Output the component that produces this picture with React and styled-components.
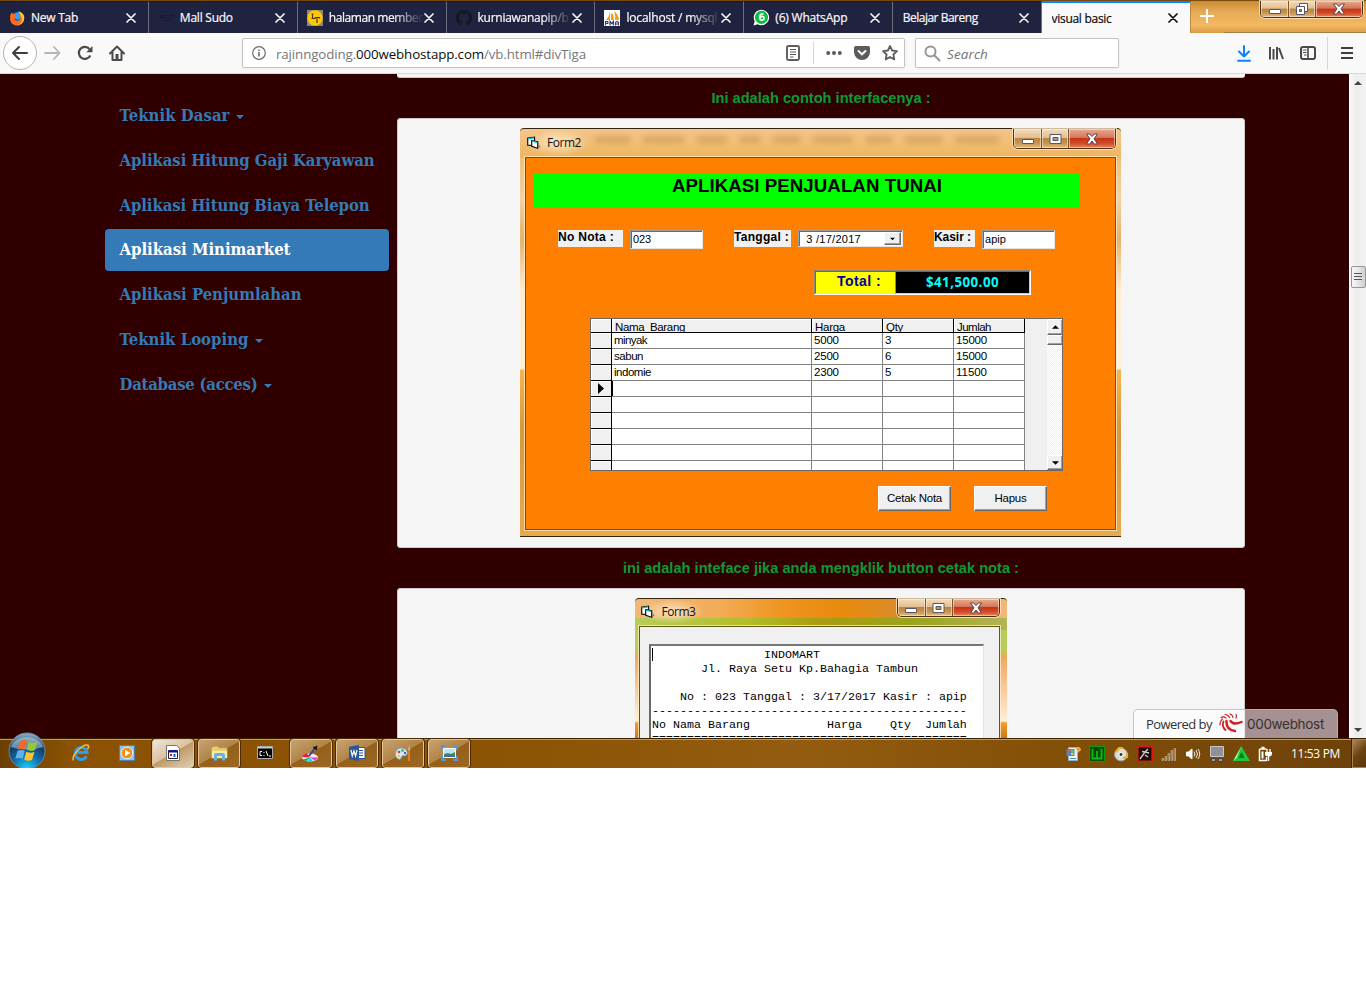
import React, { useLayoutEffect, useRef, useState } from "react";
import styled, { createGlobalStyle, css } from "styled-components";

const ui = `"Open Sans", "Noto Sans", sans-serif`;
const arial = `"Liberation Sans", Arial, sans-serif`;

const Global = createGlobalStyle`
  *, *::before, *::after { box-sizing: border-box; }
  html, body { margin: 0; background: #fff; }
  body { overflow: hidden; }
  svg { display: block; flex: none; }
`;

/* Text tracked out to a set width */
const FitSpan = styled.span`
  display: inline-block;
  flex: none;
  white-space: pre;
`;
function Fit({ w, children }) {
  const ref = useRef(null);
  const [ls, setLs] = useState(0);
  useLayoutEffect(() => {
    const n = ref.current.textContent.length;
    setLs((w - ref.current.getBoundingClientRect().width) / n);
  }, [w]);
  return <FitSpan ref={ref} style={{ letterSpacing: ls }}>{children}</FitSpan>;
}

const Desktop = styled.main`
  width: 1366px;
  height: 768px;
  display: flex;
  flex-direction: column;
  overflow: hidden;
  font-family: ${ui};
`;

/* ---------- tabs ---------- */
const TabStrip = styled.div`
  height: 33px;
  flex: none;
  display: flex;
  border-top: 1px solid #7a4a08;
  background: linear-gradient(#c98a35 0, #e8ab57 35%, #f3b861 75%, #d99b48);
`;
const Tab = styled.div`
  width: 148.86px;
  flex: none;
  height: 32px;
  display: flex;
  align-items: center;
  padding: 0 12px 0 ${(p) => (p.$plain ? 9.5 : 9)}px;
  font-size: 12px;
  color: ${(p) => (p.$active ? "#0c0c0d" : "#f9f9fa")};
  background: ${(p) => (p.$active ? "#f9f9fa" : "#202340")};
  border-top: ${(p) => (p.$active ? "2px solid #0a84ff" : "1px solid #151731")};
  border-right: 1px solid ${(p) => (p.$active ? "#b98a48" : "#6b6c7d")};
`;
const TabIcon = styled.div`
  width: 16px;
  margin-right: 6px;
`;
const TabTitle = styled.div`
  flex: 1;
  min-width: 0;
  overflow: hidden;
  line-height: 18px;
  padding-top: 1px;
  -webkit-text-stroke: 0.2px;
  ${(p) => p.$fade && css`mask-image: linear-gradient(90deg, #000 68%, rgba(0, 0, 0, 0.1) 96%);`}
`;
const NewTab = styled.div`
  width: 33px;
  flex: none;
  padding: 8px 0 0 9px;
`;
const StripEnd = styled.div`
  flex: 1;
  display: flex;
  justify-content: flex-end;
  padding-right: 3px;
  border-bottom: 1px solid #a87d43;
`;

/* ---------- window buttons ---------- */
const Caps = styled.div`
  display: flex;
  flex: none;
  width: 103px;
  height: ${(p) => p.$h || 20}px;
  border: 1px solid #4d3116;
  border-top: 0;
  border-radius: 0 0 5px 5px;
  overflow: hidden;
  box-shadow: 0 0 0 1px rgba(255, 236, 205, 0.75);
`;
const Cap = styled.div`
  width: ${(p) => p.$w}px;
  display: flex;
  align-items: center;
  justify-content: center;
  box-shadow: inset 0 0 0 1px rgba(255, 240, 220, 0.55);
  border-right: ${(p) => (p.$close ? 0 : "1px solid #7c552c")};
  background: ${(p) =>
    p.$close
      ? "linear-gradient(#e8ab92 0, #d5765a 45%, #c2351a 50%, #d44a25 75%, #e8845a 100%)"
      : "linear-gradient(#f3dcbd 0, #e2bf90 45%, #b98342 50%, #c8944f 75%, #e5bd85 100%)"};
`;
function WindowButtons({ h, restore }) {
  return (
    <Caps $h={h}>
      <Cap $w={28}>
        <svg width="14" height="12" viewBox="0 0 14 12"><rect x="1.5" y="6.5" width="11" height="4" rx="0.5" fill="#fff" stroke="#54586a" /></svg>
      </Cap>
      <Cap $w={27}>
        {restore ? (
          <svg width="14" height="13" viewBox="0 0 14 13" fill="#fff" stroke="#54586a">
            <path d="M4.5.5h8v8h-3v-5h-5z" />
            <path d="M1.5 3.5h8v8h-8z" /><path fill="#b98342" d="M4.5 6.5h2v2h-2z" />
          </svg>
        ) : (
          <svg width="13" height="12" viewBox="0 0 13 12" fill="#fff" stroke="#54586a">
            <path d="M1 1.5h11v9H1z" /><path fill="#c8944f" d="M4 4.5h5v3H4z" />
          </svg>
        )}
      </Cap>
      <Cap $w={46} $close>
        <svg width="14" height="12" viewBox="0 0 14 12"><path d="M1.500 1h3.200L7 3.600 9.300 1h3.200L9 5.800 12.500 11H9.300L7 8 4.700 11H1.500l3.500-5.200z" fill="#fff" stroke="#54464e" /></svg>
      </Cap>
    </Caps>
  );
}

/* ---------- toolbar ---------- */
const Toolbar = styled.div`
  height: 41px;
  flex: none;
  display: flex;
  align-items: center;
  padding-left: 3px;
  background: #f9f9fa;
  border-bottom: 1px solid #d9d9da;
`;
const BackButton = styled.div`
  width: 34px;
  height: 34px;
  flex: none;
  display: grid;
  place-items: center;
  border: 1px solid #b4b4b5;
  border-radius: 50%;
  background: #fff;
`;
const Slot = styled.div`
  width: ${(p) => p.$w}px;
  flex: none;
  display: grid;
  place-items: center;
  margin-left: ${(p) => p.$ml || 0}px;
`;
const Field = styled.div`
  width: ${(p) => p.$w}px;
  height: 30px;
  flex: none;
  display: flex;
  align-items: center;
  margin-left: ${(p) => p.$ml}px;
  padding: 0 6px 0 8px;
  background: #fff;
  border: 1px solid #c3c3c4;
  border-radius: 2px;
  box-shadow: 0 1px 3px rgba(0, 0, 0, 0.06);
`;
const Url = styled.div`
  flex: 1;
  padding: 1px 0 0 9px;
  font-size: 13.3px;
  color: #77777a;
  b { font-weight: 400; color: #0c0c0d; }
`;
const SearchText = styled.div`
  padding: 1px 0 0 6px;
  font-size: 13.5px;
  font-style: italic;
  color: #737375;
`;
const Rule = styled.div`
  width: 1px;
  height: ${(p) => p.$h}px;
  margin: 0 ${(p) => p.$r}px 0 ${(p) => p.$l}px;
  background: #d7d7db;
`;

/* ---------- page ---------- */
const Viewport = styled.div`
  height: 664px;
  flex: none;
  display: flex;
  overflow: hidden;
  background: #300000;
`;
const PageArea = styled.div`
  width: 1349px;
  flex: none;
  display: flex;
  align-items: flex-start;
  padding-left: 105px;
`;
const Pills = styled.nav`
  width: 284px;
  padding-top: 20.6px;
  margin-right: 8px;
  display: flex;
  flex-direction: column;
  gap: 2.8px;
`;
const Pill = styled.a`
  height: 42px;
  flex: none;
  display: flex;
  align-items: center;
  padding: 0 14px 1px 14.5px;
  border-radius: 4px;
  font: bold 16.6px "DejaVu Serif Condensed", "DejaVu Serif", serif;
  font-stretch: condensed;
  color: ${(p) => (p.$active ? "#fff" : "#337ab7")};
  background: ${(p) => (p.$active ? "#337ab7" : "transparent")};
`;
const Caret = styled.i`
  margin: 4px 0 0 6px;
  border-top: 4px solid;
  border-left: 4px solid transparent;
  border-right: 4px solid transparent;
`;
const Content = styled.section`
  width: 848px;
  display: flex;
  flex-direction: column;
`;
const Well = styled.div`
  height: ${(p) => p.$h}px;
  flex: none;
  display: flex;
  justify-content: center;
  align-items: flex-start;
  padding-top: 9px;
  padding-right: 1px;
  background: #f5f5f5;
  border: 1px solid #cfcaca;
  border-radius: 3px;
`;
const WellTail = styled.div`
  height: 4px;
  flex: none;
  background: #f5f5f5;
  border-bottom: 1px solid #ccc;
  border-radius: 0 0 3px 3px;
`;
const Caption = styled.h4`
  margin: 10px 0;
  height: 20px;
  flex: none;
  text-align: center;
  font: bold 14.6px/20px ${arial};
  color: #0c9a35;
`;
const Scrollbar = styled.div`
  width: 17px;
  display: flex;
  flex-direction: column;
  align-items: center;
  background: linear-gradient(90deg, #f8f8f8, #ededed 40%, #f3f3f3);
  border-left: 1px solid #fff;
  padding: 7px 0 6px;
`;
const Thumb = styled.div`
  width: 15px;
  height: 22px;
  margin: 181px 0 auto;
  display: grid;
  place-items: center;
  border: 1px solid #979797;
  border-radius: 2px;
  background: linear-gradient(90deg, #f7f7f7, #e6e6e8 50%, #cfcfd4);
`;

/* ---------- Visual Basic windows ---------- */
const VbWindow = styled.div`
  width: ${(p) => p.$w}px;
  height: ${(p) => p.$h}px;
  flex: none;
  display: flex;
  flex-direction: column;
  border-radius: 4px 4px 0 0;
  padding: ${(p) => (p.$full ? "0 5px 6px" : "0 7px 0 4px")};
  border-top: 1px solid #33240f;
  ${(p) => p.$full && css`border-bottom: 1px solid #33240f;`}
  background: ${(p) => p.$paint};
`;
const TitleBar = styled.div`
  height: ${(p) => p.$h}px;
  flex: none;
  display: flex;
  padding-left: 2px;
`;
const TitleText = styled.div`
  display: flex;
  align-items: center;
  gap: ${(p) => p.$gap}px;
  height: ${(p) => p.$h}px;
  padding-right: 8px;
  font-size: 12px;
  color: #111;
  background: radial-gradient(closest-side, rgba(255, 246, 230, 0.7), rgba(255, 246, 230, 0));
`;
const Smudges = styled.div`
  flex: 1;
  display: flex;
  gap: 13px;
  align-items: flex-start;
  padding: 7px 14px 0 6px;
  filter: blur(3px);
  overflow: hidden;
`;
const Smudge = styled.i`
  flex: ${(p) => p.$g};
  height: 7px;
  background: rgba(110, 60, 0, 0.2);
`;
const Form = styled.div`
  flex: 1;
  min-height: 0;
  border: 1px solid ${(p) => p.$edge};
  box-shadow: 0 0 0 1px rgba(255, 240, 205, 0.75);
  background: ${(p) => p.$bg};
`;
const Banner = styled.div`
  width: 546px;
  height: 34px;
  margin: 16px 0 0 8px;
  text-align: center;
  font: bold 18.7px/24px ${arial};
  color: #000;
  background: #0f0;
`;
const Fields = styled.div`
  display: flex;
  align-items: flex-start;
  height: 19px;
  margin: 22px 0 0 32px;
  font: 11px/15px ${arial};
`;
const Label = styled.div`
  width: ${(p) => p.$w}px;
  height: 17px;
  flex: none;
  margin-right: 7px;
  background: #f0f0f0;
  font-size: 12px;
  font-weight: bold;
  line-height: 15px;
`;
const Input = styled.div`
  width: ${(p) => p.$w || 73}px;
  height: ${(p) => p.$h || 19}px;
  flex: none;
  display: flex;
  justify-content: space-between;
  margin-right: 31px;
  padding: ${(p) => (p.$h ? "1px 1px 0 4px" : "1px 1px 0 2px")};
  overflow: hidden;
  background: #fff;
  border: 1px solid #e3e3e3;
  border-top-color: #a0a0a0;
  border-left-color: #a0a0a0;
  box-shadow: inset 1px 1px #696969;
`;
const bevel = css`
  background: #f0f0f0;
  border: 1px solid;
  border-color: #fff #696969 #696969 #fff;
  box-shadow: inset -1px -1px #a0a0a0;
`;
const DropButton = styled.div`
  width: 17px;
  height: 13px;
  display: grid;
  place-items: center;
  ${bevel}
`;
const TotalBar = styled.div`
  display: flex;
  width: 217px;
  height: 25px;
  margin: 21px 0 0 288px;
  border: 1px solid #fff;
  border-top-color: #8a8a8a;
  border-left-color: #8a8a8a;
`;
const TotalLabel = styled.div`
  width: 80px;
  padding-left: 21px;
  font: bold 14px/19px ${arial};
  color: #00009c;
  background: #ff0;
  border: 1px solid #e8e8c0;
  border-top-color: #696969;
  border-left-color: #696969;
  border-right: 0;
`;
const TotalValue = styled.div`
  flex: 1;
  text-align: center;
  font: bold 13.3px/21px ${ui};
  color: #0ff;
  background: #000;
  border: 1px solid #ccc;
  border-top-color: #696969;
  border-left-color: #888;
`;
const DataGrid = styled.div`
  display: flex;
  width: 473px;
  height: 153px;
  margin: 23px 0 0 64px;
  border: 1px solid #696969;
  background: #f0f0f0;
`;
const Cells = styled.div`
  width: 434px;
  display: grid;
  grid-template-columns: 21px 200px 71px 71px 71px;
  grid-template-rows: 14px repeat(8, 16px) 9px;
  font: 11.5px/15px ${arial};
  color: #000;
`;
const Cell = styled.div`
  padding-left: 2px;
  overflow: hidden;
  background: #fff;
  border-right: 1px solid #808080;
  border-bottom: ${(p) => (p.$last ? 0 : "1px solid #808080")};
  ${(p) => p.$head && css`
    padding-left: 3px;
    line-height: 17px;
    background: #f0f0f0;
    border-color: #000;
    box-shadow: inset 1px 1px #fff;
  `}
  ${(p) => p.$cursor && css`box-shadow: inset 1px 0 #000;`}
`;
const RowMark = styled(Cell)`
  display: grid;
  place-items: center;
  padding: 0;
  background: #f0f0f0;
  border-color: #000;
  box-shadow: inset 1px 1px #fff;
`;
const GridScroll = styled.div`
  width: 15px;
  margin-left: 22px;
  display: flex;
  flex-direction: column;
  background: repeating-conic-gradient(#f0f0f0 0 25%, #fff 0 50%) 0 0 / 2px 2px;
`;
const ScrollButton = styled.div`
  height: ${(p) => p.$h}px;
  margin-top: ${(p) => p.$mt || 0};
  display: grid;
  place-items: center;
  ${bevel}
  border-right: 0;
`;
const Buttons = styled.div`
  display: flex;
  gap: 23px;
  margin: 15px 0 0 352px;
`;
const VbButton = styled.div`
  width: 73px;
  height: 25px;
  text-align: center;
  font: 11.5px/23px ${arial};
  ${bevel}
`;
const Receipt = styled.div`
  width: 335px;
  height: 110px;
  margin: 17px 0 0 9px;
  padding: 2px 0 0 1px;
  background: #fff;
  border: 2px solid #696969;
  border-top-color: #777;
  border-right: 1px solid #e3e3e3;
`;
const Lines = styled.pre`
  margin: 0;
  padding-left: 0.6px;
  font: 11.667px/14px "Liberation Mono", monospace;
  color: #000;
  background: linear-gradient(#000, #000) 0 0 / 1px 13px no-repeat;
`;
const Powered = styled.div`
  position: absolute;
  left: 1133px;
  top: 709px;
  width: 205px;
  height: 29px;
  display: flex;
  align-items: center;
  padding-left: 12px;
  font-size: 13px;
  color: #333;
  background: rgba(255, 255, 255, 0.57);
  border: 1px solid rgba(190, 180, 180, 0.8);
  border-bottom: 0;
  border-radius: 5px 5px 0 0;
`;
const Swirl = styled.svg`
  margin: 0 4px 2px 7px;
`;
const HostName = styled.div`
  font: 13.5px Inter, ${ui};
  color: #3a3032;
`;

/* ---------- taskbar ---------- */
const Taskbar = styled.footer`
  height: 30px;
  flex: none;
  display: flex;
  align-items: center;
  padding-left: 8px;
  border-top: 1px solid #3a2200;
  box-shadow: inset 0 1px #c69a5c;
  background: linear-gradient(90deg, #6b3f02 0, #8a5202 70px, #8b5303 500px, #935c10 800px, #835007 1050px, #6d410a 1366px);
`;
const StartOrb = styled.div`
  width: 38px;
  height: 38px;
  margin: -6px 14px 0 0;
  z-index: 1;
`;
const Launch = styled.div`
  width: 42px;
  height: 29px;
  flex: none;
  margin-right: 4px;
  padding-bottom: 1px;
  display: grid;
  place-items: center;
  border-radius: 3px;
  ${(p) => p.$open && css`
    border: 1px solid #e3c699;
    outline: 1px solid #4a2c04;
    outline-offset: -0.5px;
    background: linear-gradient(150deg, #c6a273 0, #b18446 48%, #94601a 50%, #9b6722 100%);
  `}
  ${(p) => p.$front && css`background: linear-gradient(150deg, #efe6da 0, #d9c2a2 48%, #bf9a66 50%, #e0cdb2 100%);`}
`;
const Tray = styled.div`
  display: flex;
  align-items: center;
  margin-left: auto;
`;
const Clock = styled.div`
  width: 75px;
  padding-left: 14px;
  font-size: 12px;
  line-height: 28px;
  color: #fff;
`;
const ShowDesktop = styled.div`
  width: 14px;
  height: 29px;
  border: 1px solid #a78150;
  border-right: 0;
  box-shadow: -1px 0 #3f2604;
  background: linear-gradient(135deg, #a9855a, #6b430f 50%, #5a3608);
`;

const Cross = ({ c = "#f9f9fa" }) => (
  <svg width="10" height="10" viewBox="0 0 10 10" stroke={c} strokeWidth="1.7" strokeLinecap="round"><path d="M1 1l8 8M9 1L1 9" /></svg>
);
const Tri = ({ down, w = 7, c = "#000" }) => (
  <svg width={w} height="4" viewBox="0 0 8 4" fill={c}><path d={down ? "M0 0h8L4 4z" : "M0 4h8L4 0z"} /></svg>
);

const tabIcons = {
  firefox: (
    <svg width="16" height="16" viewBox="0 0 16 16">
      <circle cx="8.3" cy="8" r="6.2" fill="#2a55c8" /><circle cx="9" cy="6" r="3.5" fill="#28a4f2" />
      <path d="M1 7c.2-2 1-3.800 2-5 0 1 .4 1.500 1 2 1-.4 2-.3 3 .2C5.600 5 6 6.500 7.500 6.700 6.700 8 5.700 8 5.200 9c1 2.500 5 2.300 6 0 .8-2-.3-4-1.700-5.500C13 4 15.500 6 15 9.500 14 17 3 17.500 1.300 10.500z" fill="#ff6a1c" />
      <path d="M9.500 1.200C14 2.500 16.200 6 15 9.500c-.6 3.500-4 6-7.500 5.800 4.500-.8 6.500-4.500 5-8.300C12 4.500 10 3.500 9.500 1.200z" fill="#ffc832" />
    </svg>
  ),
  mall: <svg width="16" height="16" viewBox="0 0 16 16" fill="none" stroke="#151930"><path d="M0 6h6l2-1 3 1 5-1M2 8.500l5-1 4 1 4-1M5 11l5-1 2 1" /></svg>,
  lt: (
    <svg width="16" height="16" viewBox="0 0 16 16"><path fill="#8b8874" d="M0 0h16v16H0z" /><circle cx="8" cy="8" r="7.700" fill="#ffc60a" />
      <path d="M5.500 4v4.500h2.500v-1M8 7.500h4.500v1M10 7.500v4.500M4.500 4h2M9 12h2M4.500 8.500h2" fill="none" stroke="#4a3b10" strokeWidth="1.100" /></svg>
  ),
  github: <svg width="16" height="16" viewBox="0 0 16 16" fill="#15171f"><path d="M8 0C3.580 0 0 3.580 0 8c0 3.540 2.290 6.530 5.470 7.590.4.070.550-.170.550-.380v-1.490c-2.230.480-2.700-.950-2.700-.950-.360-.920-.890-1.170-.890-1.170-.730-.500.050-.490.050-.490.810.060 1.230.830 1.230.830.720 1.230 1.880.870 2.340.670.070-.520.280-.870.510-1.070-1.780-.200-3.640-.890-3.640-3.950 0-.870.310-1.590.820-2.150-.080-.200-.360-1.020.080-2.120 0 0 .670-.210 2.200.820a7.600 7.600 0 0 1 4 0c1.530-1.040 2.200-.820 2.200-.820.440 1.100.160 1.920.080 2.120.510.560.820 1.270.820 2.150 0 3.070-1.870 3.750-3.650 3.950.290.250.540.730.540 1.480v2.190c0 .210.150.460.550.380A8 8 0 0 0 8 0z" /></svg>,
  pma: (
    <svg width="16" height="16" viewBox="0 0 16 16"><path fill="#fff" d="M0 0h16v16H0z" /><path fill="#f89c0e" d="M6 1v9H2c2-2 3.500-5 4-9zM7 3c3 1 3 5 2.500 7H7zM10 1c3 2 5 6 5 9h-4c.5-4 0-7-1-9z" />
      <path fill="none" stroke="#3b3d73" strokeWidth="1.200" d="M1.500 15.500v-4h2.300v2H1.500M6 15.500v-4l1.700 2 1.700-2v4M11.500 15.500v-3l1-1h1l1 1v3M11.500 14h3" /></svg>
  ),
  whatsapp: (
    <svg width="17" height="17" viewBox="0 0 17 17"><path d="M.5 16.500l1.200-4.300A7.700 7.700 0 1 1 4.700 15.200z" fill="#fff" /><circle cx="8.500" cy="8.300" r="6.600" fill="#10bd40" />
      <path d="M10.500 5.200c-2.500-1.200-4 .8-3.800 3.500.2 3.300 4.300 3.200 4.300.5 0-2.200-3-2.300-4-.5" fill="none" stroke="#fff" strokeWidth="1.700" /></svg>
  ),
};
const tabs = [
  { t: "New Tab", w: 47, icon: "firefox" },
  { t: "Mall Sudo", w: 53, icon: "mall" },
  { t: "halaman member", w: 94, icon: "lt", fade: true },
  { t: "kurniawanapip/b", w: 91, icon: "github", fade: true },
  { t: "localhost / mysql", w: 91, icon: "pma", fade: true },
  { t: "(6) WhatsApp", w: 72, icon: "whatsapp" },
  { t: "Belajar Bareng", w: 75 },
  { t: "visual basic", w: 60, active: true },
];
const pills = [
  { t: "Teknik Dasar", w: 110, menu: true },
  { t: "Aplikasi Hitung Gaji Karyawan", w: 255 },
  { t: "Aplikasi Hitung Biaya Telepon", w: 250 },
  { t: "Aplikasi Minimarket", w: 171, active: true },
  { t: "Aplikasi Penjumlahan", w: 182 },
  { t: "Teknik Looping", w: 129, menu: true },
  { t: "Database (acces)", w: 138, menu: true },
];
const rows = [["minyak", "5000", "3", "15000"], ["sabun", "2500", "6", "15000"], ["indomie", "2300", "5", "11500"]];
const textWidths = { minyak: 33, sabun: 29, indomie: 37 };

const FormIcon = () => (
  <svg width="14" height="13" viewBox="0 0 14 13">
    <path d="M.700 2.200L7.500 1.200v8.300L.700 9.200z" fill="#fff" stroke="#111" strokeWidth="1.200" />
    <path d="M1.200 2.800L7 1.900" stroke="#0cc" strokeWidth="1.200" />
    <path d="M4.700 4.700l6 1v6.500l-6-2z" fill="#fff" stroke="#111" strokeWidth="1.200" />
    <path d="M5.200 5.400l5 .9" stroke="#0cc" strokeWidth="1.200" />
    <path d="M11.500 8.500l2 1.800-2 2z" fill="#777" />
  </svg>
);

const Toolkit = () => (
  <Toolbar>
    <BackButton><svg width="18" height="16" viewBox="0 0 18 16" fill="none" stroke="#3e3e40" strokeWidth="2" strokeLinecap="round" strokeLinejoin="round"><path d="M16 8H2M8 2L2 8l6 6" /></svg></BackButton>
    <Slot $w={31}><svg width="17" height="14" viewBox="0 0 17 14" fill="none" stroke="#b5b5b6" strokeWidth="1.800" strokeLinecap="round" strokeLinejoin="round"><path d="M1 7h14.500M10 1l5.500 6L10 13" /></svg></Slot>
    <Slot $w={34}><svg width="16" height="16" viewBox="0 0 16 16"><path d="M13.300 10.500A6 6 0 1 1 12.500 4" fill="none" stroke="#4a4a4c" strokeWidth="2.200" /><path d="M15.500 1v6.200H9.300z" fill="#4a4a4c" /></svg></Slot>
    <Slot $w={29}><svg width="16" height="16" viewBox="0 0 16 16"><path d="M1 8.500L8 1.500l7 7M3.500 7.500V15h9V7.500" fill="none" stroke="#4a4a4c" strokeWidth="2" strokeLinejoin="round" strokeLinecap="round" /><path d="M6.500 9h3v5h-3z" fill="#4a4a4c" /></svg></Slot>
    <Field $w={663} $ml={111}>
      <svg width="16" height="16" viewBox="0 0 16 16"><circle cx="8" cy="8" r="6.300" fill="none" stroke="#6a6a6c" strokeWidth="1.200" /><path d="M7.200 7h1.600v4.500H7.200zM7.200 4.400h1.600V6H7.200z" fill="#6a6a6c" /></svg>
      <Url><Fit w={310}>rajinngoding.<b>000webhostapp.com</b>/vb.html#divTiga</Fit></Url>
      <svg width="16" height="16" viewBox="0 0 16 16" fill="none" stroke="#5c5c5e"><rect x="2" y="1" width="12" height="14" rx="1.500" strokeWidth="1.900" /><path d="M5 4.500h6M5 7h6M5 9.500h6M5 12h3.500" /></svg>
      <Rule $h={22} $l={12} $r={12} />
      <svg width="16" height="16" viewBox="0 0 16 16" fill="#5c5c5e"><circle cx="2.200" cy="8" r="2" /><circle cx="8" cy="8" r="2" /><circle cx="13.800" cy="8" r="2" /></svg>
      <Slot $w={40}><svg width="16" height="16" viewBox="0 0 16 16"><path d="M1.800 1h12.400Q16 1 16 2.800V7a8 8 0 0 1-16 0V2.800Q0 1 1.800 1z" fill="#5c5c5e" /><path d="M4.500 6L8 9.300 11.500 6" fill="none" stroke="#fff" strokeWidth="2" strokeLinecap="round" /></svg></Slot>
      <svg width="16" height="16" viewBox="0 0 16 16"><path d="M8 1l2.100 4.500 4.900.6-3.600 3.400.9 4.900L8 12l-4.300 2.400.9-4.900L1 6.100l4.900-.6z" fill="none" stroke="#5c5c5e" strokeWidth="1.800" strokeLinejoin="round" /></svg>
    </Field>
    <Field $w={204} $ml={10}>
      <svg width="17" height="17" viewBox="0 0 17 17" fill="none" stroke="#959597" strokeWidth="2" strokeLinecap="round"><circle cx="6.500" cy="6.500" r="5" /><path d="M10.500 10.500l5 5" /></svg>
      <SearchText><Fit w={41}>Search</Fit></SearchText>
    </Field>
    <Slot $w={32} $ml={109}><svg width="14" height="17" viewBox="0 0 14 17" fill="none" stroke="#0a84ff" strokeWidth="2"><path d="M7 1v10M2 6.500l5 5 5-5M1 15.700h12" strokeLinecap="round" strokeLinejoin="round" /></svg></Slot>
    <Slot $w={32}><svg width="16" height="16" viewBox="0 0 16 16" stroke="#4a4a4c" strokeWidth="2"><path d="M2 2v12.500M5.500 4v10.500M9 2v12.500M11 3l4 11" /></svg></Slot>
    <Slot $w={32}><svg width="16" height="14" viewBox="0 0 16 14" fill="none" stroke="#4a4a4c"><rect x="1" y="1" width="14" height="12" rx="2" strokeWidth="2" /><path d="M8 1v12" strokeWidth="1.600" /><path d="M3 4h3.500M3 6.500h3.500M4 9h2.500" /></svg></Slot>
    <Rule $h={33} $l={3} $r={4} />
    <Slot $w={30}><svg width="12" height="12" viewBox="0 0 12 12" stroke="#3f3f41" strokeWidth="2"><path d="M0 1h12M0 6h12M0 11h12" /></svg></Slot>
  </Toolbar>
);

const Form2 = () => (
  <VbWindow
    $w={601} $h={409} $full
    $paint="linear-gradient(180deg, #f3c68a 0, #efb661 28px, rgba(0,0,0,0) 29px), linear-gradient(180deg, #efc07c 30px, #f1d3a3 70px, #e5b26a 110px, #ffecd0 160px, #fff1de 240px, #f9b44d 241px, #d49a3c 300px, #e8a94f 409px)"
  >
    <TitleBar $h={28}>
      <TitleText $h={27} $gap={6}><FormIcon /><Fit w={34}>Form2</Fit></TitleText>
      <Smudges>{[35, 40, 30, 20, 26, 40, 26, 36, 44].map((g, i) => <Smudge key={i} $g={g} />)}</Smudges>
      <WindowButtons />
    </TitleBar>
    <Form $edge="#7d4a10" $bg="#ff8000">
      <Banner><Fit w={270}>APLIKASI PENJUALAN TUNAI</Fit></Banner>
      <Fields>
        <Label $w={65}><Fit w={56}>No Nota :</Fit></Label>
        <Input><Fit w={18}>023</Fit></Input>
        <Label $w={57}><Fit w={55}>Tanggal :</Fit></Label>
        <Input $w={105} $h={17}>
          <Fit w={58}> 3 /17/2017</Fit>
          <DropButton><Tri down w={5} /></DropButton>
        </Input>
        <Label $w={41}><Fit w={37}>Kasir :</Fit></Label>
        <Input><Fit w={21}>apip</Fit></Input>
      </Fields>
      <TotalBar>
        <TotalLabel><Fit w={44}>Total :</Fit></TotalLabel>
        <TotalValue><Fit w={73}>$41,500.00</Fit></TotalValue>
      </TotalBar>
      <DataGrid>
        <Cells>
          <RowMark />
          <Cell $head><Fit w={70}>Nama  Barang</Fit></Cell>
          <Cell $head><Fit w={30}>Harga</Fit></Cell>
          <Cell $head><Fit w={17}>Qty</Fit></Cell>
          <Cell $head><Fit w={34}>Jumlah</Fit></Cell>
          {Array.from({ length: 9 }, (_, r) => (
            <React.Fragment key={r}>
              <RowMark $last={r === 8}>
                {r === 3 && <svg width="6" height="11" viewBox="0 0 6 11"><path d="M0 0v11l6-5.500z" /></svg>}
              </RowMark>
              {[0, 1, 2, 3].map((c) => {
                const v = rows[r]?.[c];
                return (
                  <Cell key={c} $last={r === 8} $cursor={r === 3 && c === 0}>
                    {v && <Fit w={textWidths[v] || v.length * 6.2}>{v}</Fit>}
                  </Cell>
                );
              })}
            </React.Fragment>
          ))}
        </Cells>
        <GridScroll>
          <ScrollButton $h={16}><Tri /></ScrollButton>
          <ScrollButton $h={10} />
          <ScrollButton $h={15} $mt="auto"><Tri down /></ScrollButton>
        </GridScroll>
      </DataGrid>
      <Buttons>
        <VbButton><Fit w={55}>Cetak Nota</Fit></VbButton>
        <VbButton><Fit w={32}>Hapus</Fit></VbButton>
      </Buttons>
    </Form>
  </VbWindow>
);

const receipt = [
  " ".repeat(16) + "INDOMART",
  " ".repeat(7) + "Jl. Raya Setu Kp.Bahagia Tambun",
  "",
  "    No : 023 Tanggal : 3/17/2017 Kasir : apip",
  "-".repeat(45),
  "No Nama Barang           Harga    Qty  Jumlah",
  "=".repeat(45),
].join("\n");

const Form3 = () => (
  <VbWindow
    $w={372} $h={160}
    $paint="linear-gradient(90deg, #f0b878 0, #f3ac58 22%, #ef9420 40%, #e88a0c 55%, #d98c2c 72%, #f3b878 100%) 0 0 / 100% 19px no-repeat, linear-gradient(90deg, #b9cc56, #b3bd2b 30%, #a99b12 50%, #9aa51c 75%, #b3b455) 0 19px / 100% 12px no-repeat, linear-gradient(180deg, #b8cc58 50px, #f0a860 58px, #f7c48e 85px, #fff0da 122px, #f39a2c 124px, #c97812 140px)"
  >
    <TitleBar $h={27}>
      <TitleText $h={25} $gap={7}><FormIcon /><Fit w={34}>Form3</Fit></TitleText>
      <Smudges />
      <WindowButtons h={18} />
    </TitleBar>
    <Form $edge="#5d5a10" $bg="#f0f0f0">
      <Receipt><Lines>{receipt}</Lines></Receipt>
    </Form>
  </VbWindow>
);

const launchers = [
  { i: <svg width="18" height="18" viewBox="0 0 18 18"><path d="M14.500 12.200a6 6 0 1 1 .6-3.700H5" fill="none" stroke="#2f9de8" strokeWidth="3" /><path d="M1.500 16.500C-1 12 11-1 16 1.200c1 .6.500 2.500-.5 4" fill="none" stroke="#f3c13a" strokeWidth="1.500" /></svg> },
  { i: <svg width="16" height="16" viewBox="0 0 16 16"><path fill="#8fc4ea" stroke="#4a83b4" d="M.5.500h15v15H.5z" /><circle cx="8" cy="8" r="5.800" fill="#f98b14" stroke="#e5f1fa" /><path d="M6 4.800v6.400L11.500 8z" fill="#fff" /></svg> },
  { front: true, open: true, i: <svg width="14" height="16" viewBox="0 0 14 16"><path fill="#fff" stroke="#777" d="M.5.500h10l3 3v12H.5z" /><path fill="#fff" stroke="#222" d="M2.500 5.500h9v8h-9z" /><path fill="#14148c" d="M3 5h8v2.500H3z" /><path fill="#d21a1a" d="M4 9h2v2H4z" /><path fill="#1a5cd2" d="M7.500 9h2v3h-2z" /></svg> },
  { open: true, i: <svg width="17" height="16" viewBox="0 0 17 16"><path fill="#e8cf74" stroke="#c3a650" d="M.5 3.500L2 1.500h5l1 1.500h8v10H.5z" /><path fill="#f7eaa5" d="M1 6h15v7H1z" /><path fill="#62b5e2" d="M3 15.500V10q0-2 2-2h7q2 0 2 2v5.500h-3V11H6v4.500z" /></svg> },
  { i: <svg width="16" height="14" viewBox="0 0 16 14"><path fill="#000" stroke="#aaa" d="M.5.500h15v12H.5z" /><path fill="#ccc" d="M1 1h14v1.500H1z" /><path d="M5 5.500H3v4h2M7 6v1M7 9v1M9 5l2 5M12 10h2" stroke="#fff" fill="none" /></svg> },
  { open: true, i: <svg width="18" height="17" viewBox="0 0 18 17"><ellipse cx="8" cy="12.500" rx="8" ry="4" fill="#f3e9ee" /><path fill="#e81e3c" d="M8 12.500L0 12q1-3 5-3.500z" /><path fill="#12b34a" d="M8 12.500L1 14.500l3 1.700z" /><path fill="#2ad0e8" d="M8 12.500l-3 3.700 6 .1z" /><path fill="#d43ae0" d="M8 12.500l5 3 3-3z" /><path d="M7 11l6-8" stroke="#3040a0" strokeWidth="1.800" /><path d="M11.500 2l3.500 2.500M13.500 3l1.500-2" stroke="#111" strokeWidth="1.800" /></svg> },
  { open: true, i: <svg width="17" height="16" viewBox="0 0 17 16"><path fill="#fff" stroke="#2b579a" d="M8 2.500h8v11H8z" /><path stroke="#2b579a" d="M10 5.500h4M10 8h4M10 10.500h4" /><path fill="#2b579a" d="M0 1.800L10 0v16L0 14.200z" /><path d="M2 5l1.300 6L5 6l1.600 5L8 5" fill="none" stroke="#fff" strokeWidth="1.200" /></svg> },
  { open: true, i: <svg width="17" height="16" viewBox="0 0 17 16"><path d="M6.500 3C2 3 .5 6.500.5 9.500S3 15 5.500 14c1.200-.8.3-2.300 1.500-3 1.500-.7 3 .5 4.500-1 2.500-3-1-7-5-7z" fill="#d9e9f4" stroke="#7aa7c4" /><circle cx="4" cy="7" r="1.300" fill="#d33" /><circle cx="7.500" cy="5.500" r="1.300" fill="#3a3" /><circle cx="10" cy="8" r="1.200" fill="#36c" /><circle cx="4" cy="11" r="1.200" fill="#ec3" /><path d="M14 5v11" stroke="#e07c24" strokeWidth="2.200" /><path d="M13 5l1-5 1.500 5z" fill="#d9b284" /></svg> },
  { open: true, i: <svg width="17" height="16" viewBox="0 0 17 16"><path fill="none" stroke="#4d9ad8" strokeWidth="2" d="M1 5V1h4M12 1h4v4M16 11v4h-4M5 15H1v-4" /><path fill="#bfe3f4" stroke="#fff" d="M2.500 3.500h12v9h-12z" /><path fill="#3a8a6c" d="M3 12V9l4-1 3 1 4-2v5z" /><path fill="#2c6fae" d="M3 10.500h11V12H3z" /></svg> },
];

const tray = [
  <svg width="16" height="16" viewBox="0 0 16 16"><path fill="#e8f3fa" stroke="#8ab3cc" d="M3.500 1.500h9v13h-9z" /><path fill="#3b8ed8" d="M1.500 3h8v7h-8z" /><path fill="#e2562a" d="M3 4h2.500v2.500H3z" /><path fill="#80c040" d="M6 4h2.500v2.500H6z" /><path fill="#f4c430" d="M6 7h2.500v2H6z" /><path d="M11 3q3-2.500 4 .5l-2.500 2.500" stroke="#f0b040" strokeWidth="2" fill="none" /><path stroke="#5a8caa" d="M5 12.500h6" /></svg>,
  <svg width="16" height="16" viewBox="0 0 16 16"><path fill="#064d08" stroke="#0b9a12" d="M.5.500h15v15H.5z" /><path d="M3.500 3v9.500h9V3M8 5v7" stroke="#0cb916" strokeWidth="1.800" fill="none" /></svg>,
  <svg width="16" height="16" viewBox="0 0 16 16"><circle cx="8" cy="8.500" r="6.500" fill="#ddd" stroke="#999" /><path d="M3 6l3-4 4 0M10 12l4-1v-4" stroke="#e4b322" strokeWidth="2.200" fill="none" /><circle cx="8" cy="8.500" r="2" fill="#333" stroke="#fff" /></svg>,
  <svg width="16" height="16" viewBox="0 0 16 16"><path fill="#1a0d0d" stroke="#e31414" strokeWidth="1.600" d="M.8.800h14.400v14.400H.8z" /><path d="M3 13l5-7 4 1M5 5.500l3 .5 3-3M8 9l3 2" stroke="#d8c8c8" strokeWidth="1.300" fill="none" /></svg>,
  <svg width="16" height="16" viewBox="0 0 16 16" stroke="#b79d78"><path fill="#7d6340" d="M1 12.500h1.500v2H1zM4 10.500h1.500v4H4zM7 7.500h1.500v7H7zM10 4.500h1.500v10H10zM13 2.500h1.500v12H13z" /></svg>,
  <svg width="16" height="16" viewBox="0 0 16 16"><path fill="#fff" stroke="#fff" d="M1.500 6h2L7 3v10L3.500 10h-2z" /><path d="M9 5.500q2 2.500 0 5M11 4q3 4 0 8M13 3q3.500 5 0 10" stroke="#fff" strokeWidth="0.900" fill="none" /></svg>,
  <svg width="16" height="16" viewBox="0 0 16 16"><path fill="#8f9196" stroke="#c7c7c7" d="M1.500.500h13v10h-13z" /><path fill="#9a9ca0" stroke="#444" d="M2.500 12.500h4v3h-4zM9.500 12.500h4v3h-4z" /></svg>,
  <svg width="17" height="16" viewBox="0 0 17 16"><path fill="#1fc43a" d="M8.500 0L17 15H0z" /><path fill="#8cf59a" d="M8.500 0L4 12 0 15z" /><path fill="#0b7a1e" d="M8.500 6l3 6H5.500z" /></svg>,
  <svg width="16" height="16" viewBox="0 0 16 16"><path d="M2.500 3h7M2.500 3v11.500h7V11M4.500 1.500h3" fill="none" stroke="#fff" strokeWidth="1.500" /><path d="M4.500 5.500h2v7h-2z" fill="#fff" /><path d="M8 6h7v2q0 2.500-3.500 2.500T8 8z" fill="#fff" /><path d="M10 3v3M13 3v3M11.500 10v5" stroke="#fff" strokeWidth="1.400" /></svg>,
];

export default function App() {
  return (
    <Desktop>
      <Global />
      <TabStrip>
        {tabs.map((t) => (
          <Tab key={t.t} $active={t.active} $plain={!t.icon}>
            {t.icon && <TabIcon>{tabIcons[t.icon]}</TabIcon>}
            <TabTitle $fade={t.fade}><Fit w={t.w}>{t.t}</Fit></TabTitle>
            <Cross c={t.active ? "#0c0c0d" : "#f9f9fa"} />
          </Tab>
        ))}
        <NewTab><svg width="14" height="14" viewBox="0 0 14 14" stroke="#fff" strokeWidth="2"><path d="M7 0v14M0 7h14" /></svg></NewTab>
        <StripEnd><WindowButtons h={17} restore /></StripEnd>
      </TabStrip>
      <Toolkit />
      <Viewport>
        <PageArea>
          <Pills>
            {pills.map((p) => (
              <Pill key={p.t} $active={p.active}><Fit w={p.w}>{p.t}</Fit>{p.menu && <Caret />}</Pill>
            ))}
          </Pills>
          <Content>
            <WellTail />
            <Caption><Fit w={219}>Ini adalah contoh interfacenya :</Fit></Caption>
            <Well $h={430}><Form2 /></Well>
            <Caption><Fit w={396}>ini adalah inteface jika anda mengklik button cetak nota :</Fit></Caption>
            <Well $h={200}><Form3 /></Well>
          </Content>
        </PageArea>
        <Scrollbar>
          <Tri w={8} c="#444" />
          <Thumb><svg width="8" height="8" viewBox="0 0 8 8" stroke="#555"><path d="M0 .5h8M0 3.500h8M0 6.500h8" /></svg></Thumb>
          <Tri down w={8} c="#444" />
        </Scrollbar>
      </Viewport>
      <Powered>
        <Fit w={66}>Powered by</Fit>
        <Swirl width="24" height="20" viewBox="0 0 24 20" fill="none" stroke="#cf2027" strokeLinecap="round">
          <path d="M11.500 8q3 4.500 11 1M7.500 8q-.5 9 8.500 10" strokeWidth="2.400" />
          <path d="M4.500 8.500q-2 5 2 8.500" strokeWidth="1.800" />
          <path d="M3.500 6Q1 8 1 12M7 5Q4.500 3 2 4.500M10.500 4.500Q9 1.500 6 1.500M14 4.500Q13.500 1.500 11 .8M17 5q1-2 0-3.500" strokeWidth="1.200" />
        </Swirl>
        <HostName><Fit w={77}>000webhost</Fit></HostName>
      </Powered>
      <Taskbar>
        <StartOrb>
          <svg width="38" height="38" viewBox="0 0 38 38">
            <defs>
              <radialGradient id="orb" cx=".5" cy="1" r=".95"><stop offset="0" stopColor="#19d8ff" /><stop offset=".45" stopColor="#1267a8" /><stop offset=".75" stopColor="#123d66" /><stop offset="1" stopColor="#7fa6bf" /></radialGradient>
            </defs>
            <circle cx="19" cy="19" r="18" fill="url(#orb)" stroke="#6e8796" />
            <path d="M3 15A17 15 0 0 1 35 15Q19 20 3 15z" fill="#dcebf2" opacity=".45" />
            <path d="M12 9q4-2 7 0l-2 8.500q-3-1.500-7 0z" fill="#ee6a2c" /><path d="M20.500 9.500q4 2.500 9 .5l-2.500 8q-4 2-8-.2z" fill="#93c83d" />
            <path d="M9.500 19q4-1.800 7.300 0L14.500 27q-3-2-7.200 0z" fill="#5db4e8" /><path d="M18.300 19.500q4 2.200 8.200.3L24 28q-4 1.800-7.800-.5z" fill="#fcc52e" />
          </svg>
        </StartOrb>
        {launchers.map((l, i) => <Launch key={i} $open={l.open} $front={l.front}>{l.i}</Launch>)}
        <Tray>
          {tray.map((t, i) => <Slot key={i} $w={24}>{t}</Slot>)}
          <Clock><Fit w={49}>11:53 PM</Fit></Clock>
          <ShowDesktop />
        </Tray>
      </Taskbar>
    </Desktop>
  );
}
